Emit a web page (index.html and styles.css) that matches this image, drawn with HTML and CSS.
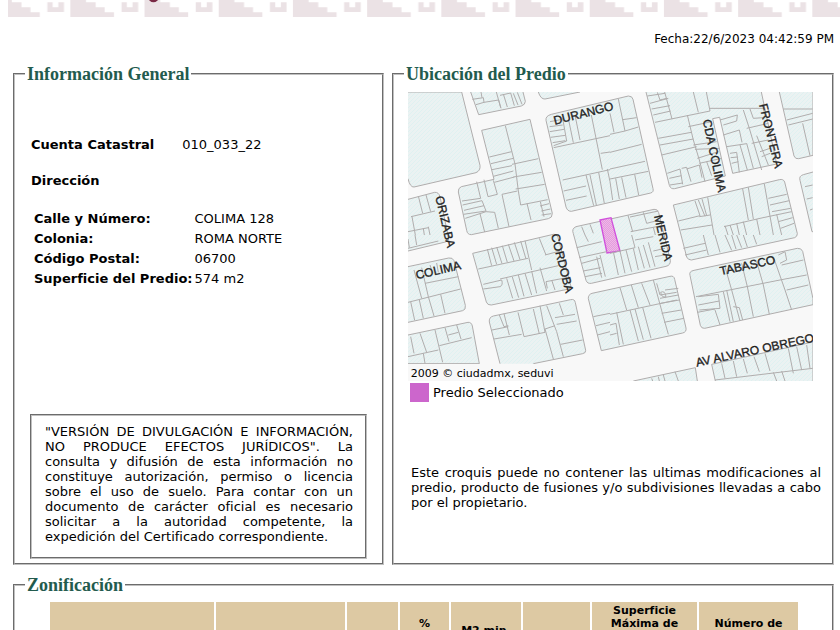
FILE: index.html
```html
<!DOCTYPE html>
<html lang="es">
<head>
<meta charset="utf-8">
<meta name="viewport" content="width=device-width, initial-scale=1">
<title>Información del Predio</title>
<link rel="stylesheet" href="styles.css">
</head>
<body>
<header class="banner">
<svg class="fret" aria-hidden="true">
<defs>
<pattern id="greca" x="-35.6" y="0" width="222.6" height="60" patternUnits="userSpaceOnUse" patternTransform="scale(.33333)">
<path fill="#ebe2e5" d="M0 0H47V7H76V22H103V37H131V51H0ZM153.600 7H169.600V22H186.600V7H203.600V36H153.600Z"/>
</pattern>
</defs>
<rect width="100%" height="17" fill="url(#greca)"/>
<circle cx="145.500" cy="-3" r="5.300" fill="#792844"/>
</svg>
</header>
<main class="page">
<p class="date">Fecha:22/6/2023 04:42:59 PM</p>
<div class="columns">
<fieldset class="panel general">
<legend>Información General</legend>
<dl class="account"><dt>Cuenta Catastral</dt><dd>010_033_22</dd></dl>
<h2 class="subtitle">Dirección</h2>
<table class="address">
<tr><th scope="row">Calle y Número:</th><td>COLIMA 128</td></tr>
<tr><th scope="row">Colonia:</th><td>ROMA NORTE</td></tr>
<tr><th scope="row">Código Postal:</th><td>06700</td></tr>
<tr><th scope="row">Superficie del Predio:</th><td>574 m2</td></tr>
</table>
<p class="notice">"VERSIÓN DE DIVULGACIÓN E INFORMACIÓN, NO PRODUCE EFECTOS JURÍDICOS". La consulta y difusión de esta información no constituye autorización, permiso o licencia sobre el uso de suelo. Para contar con un documento de carácter oficial es necesario solicitar a la autoridad competente, la expedición del Certificado correspondiente.</p>
</fieldset>
<fieldset class="panel location">
<legend>Ubicación del Predio</legend>
<svg class="map" viewBox="0 0 1215 867" role="img" aria-label="Croquis de ubicación del predio">
<defs>
<pattern id="hatch" width="12" height="12" patternUnits="userSpaceOnUse"><rect width="12" height="12" fill="#ebf2f2"/><path d="M-3 3L3-3M0 12L12 0M9 15L15 9" stroke="#dcf1f0" stroke-width="2.500"/></pattern>
<pattern id="lot" width="6" height="6" patternUnits="userSpaceOnUse"><rect width="6" height="6" fill="#f0b8e8"/><path d="M0 6L6 0" stroke="#dc8ed8" stroke-width="2"/></pattern>
</defs>
<rect width="1215" height="867" fill="#f8f8f8"/>
<g class="blocks">
<path d="M0 0H161L216 220Q218 236 204 242L18 285Q6 286 0 260"/>
<path d="M188 0L212 68L340 42Q352 38 352 28L345 0"/>
<path d="M221 115L366 82L433 364Q433 378 421 380L190 428Q178 428 176 415L151 300Q150 288 160 284L258 262Z"/>
<path d="M391 0Q398 22 411 21L516 0"/>
<path d="M414 85Q412 72 430 67L661 12Q673 12 675 22L735 290Q738 300 728 303L490 358Q478 358 474 345Z"/>
<path d="M714 0L784 280Q788 292 800 290L952 252L914 80L935 76L974 244L1106 216L1060 0"/>
<path d="M1114 0L1158 192Q1162 202 1172 200L1215 190V0"/>
<path d="M796 339L1114 263Q1126 260 1130 270L1168 425Q1168 434 1160 437L850 504Q840 504 836 495Z"/>
<path d="M1215 240L1186 248Q1172 252 1176 265L1212 419H1217"/>
<path d="M0 322L80 301Q92 300 96 314L122 440Q122 448 112 450L0 477"/>
<path d="M0 524L122 498Q134 496 138 506L172 640Q174 654 164 656L0 691"/>
<path d="M194 484L436 427Q446 424 450 436L488 580Q490 590 478 592L250 639Q238 640 235 630Z"/>
<path d="M276 815L244 690Q242 676 256 672L488 623Q500 620 502 632L533 775Q534 783 524 785L376 815"/>
<path d="M0 729L180 691Q190 690 193 702L214 815H0"/>
<path d="M496 425Q490 410 504 404L738 352Q748 350 752 362L787 505Q788 520 774 523L550 574Q538 576 534 565Z"/>
<path d="M580 776L541 620Q540 608 552 604L786 553Q798 550 800 562L834 708Q836 720 824 723Z"/>
<path d="M846 550Q842 538 858 535L1168 469Q1180 468 1184 478L1215 620V638L890 709Q880 710 877 700Z"/>
<path d="M676 867L862 827L868 867"/>
<path d="M922 867L911 817L1215 750V867"/>
</g>
<path class="selected" d="M576 384L609 377L636 477L597 483Z"/>
<g class="lots">
<g transform="translate(-24 -21)">
<path d="M217 43L250 38L252 52L296 45L303 70M289 21L302 68M252 52L228 59M246 38L243 21M310 27L322 66M300 31L332 24L343 62M340 25L354 60M352 22L366 58"/>
<path d="M316 122L345 237L355 318L362 360L443 344M268 216L335 200M273 236L340 220M276 254L336 242M280 274L340 258M283 292L343 276M336 238L415 221M340 276L425 262M347 312L434 298M306 328L352 318M306 328L327 425M381 355L393 405M421 350L432 395M420 363L447 356M424 378L451 372M425 390L454 386"/>
<path d="M230 290L242 340L186 348M252 284L264 335L292 328L280 286M188 360L246 347L258 378L190 388M192 376L252 362M196 400L258 380L284 382L295 430M240 386L254 441"/>
<path d="M488 100L500 168L461 182M506 105L520 173M526 95L540 165M574 90L607 254M461 188L630 152M449 125L488 120M449 140L492 133M452 157L496 151M458 173L496 167M450 110L482 104M488 285L630 254M558 270L581 362M570 270L589 360M596 262L613 355M491 318L558 303M498 346L560 333M602 205L630 201M622 252L630 290"/>
<path d="M55 333L68 385M78 330L92 380M33 395L105 378M36 395L46 450M70 430L73 450M85 425L90 450M24 440L85 428M545 425L555 450M570 418L580 445"/>
</g>
<g transform="translate(606 -21)">
<path d="M25 42L45 138L0 148M0 85L12 142M38 104L80 98M45 138L85 126M0 202L95 178M0 252L105 229M0 282L115 259M17 280L28 342M35 277L48 338M74 268L86 330M0 290L8 345"/>
<path d="M112 33L165 25M120 55L175 40M125 72L180 62M130 90L182 78M135 112L300 78L289 21M142 22L150 45L170 40M164 21L186 102M250 21L265 82M232 90L250 165L268 225L285 290M145 160L244 142M150 180L250 162M155 210L260 185M235 125L305 110M250 180L320 170M255 193L330 190M262 220L325 200M268 235L335 220M172 265L210 252L218 298M178 280L214 272M180 300L218 294M215 250L230 247L243 290M230 252L268 240L276 278M290 230L305 272M300 70H465M330 105L382 90L380 108L340 120M400 75L418 130L455 255M420 72L430 100L460 98M340 150L388 135L396 172M350 185L410 176M360 205L380 202L388 262M362 218L383 216M365 235L385 230M390 180L412 255M410 175L430 250M440 152L475 240M410 130L475 115M425 175L475 165M450 200L480 190M455 215L480 205"/>
<path d="M520 72H608M530 105L608 85M535 120L608 102M578 115L600 212M585 305L608 300M590 342L608 338M600 375L608 372"/>
<path d="M255 348L270 392L205 408M265 345L285 394M276 342L290 392M293 337L312 450M268 395L300 390M212 435L306 420M398 312L415 405M415 307L430 402M463 297L490 450M475 340L530 328M480 360L538 347M486 380L542 370M342 425L450 400M345 422L354 450M360 420L370 450M380 415L388 450M400 410L410 450M440 402L450 450M450 400L545 380M500 388L515 450M505 410L548 398M512 430L552 415"/>
<path d="M54 391L68 440M60 396L145 378M100 382L110 415L145 406M62 440L140 425M130 427L136 450"/>
</g>
<g transform="translate(-24 429)">
<path d="M45 0L50 30M24 40L115 18M24 12L28 38M42 105L65 190M65 98L85 185M90 90L95 105M110 84L115 112M75 145L175 125M24 202L182 162M32 200L44 256M58 195L70 250M85 185L102 243M122 178L135 235"/>
<path d="M235 102L384 70M262 42L275 92M275 38L290 88M290 36L306 86M307 32L322 82M325 28L342 78M343 22L360 74M362 18L378 72M375 17L395 105M250 148L305 135Q310 150 300 155L250 162M320 130L338 190M337 126L356 188M355 120L372 184M375 115L395 180M395 108L410 175M420 98L440 168M300 132L475 92M435 60L480 48M418 10L438 60M438 140L500 128M442 160L438 140M455 135L465 165"/>
<path d="M298 240L312 275L325 272M312 236L328 300M276 285L325 275M282 312L365 298M354 232L372 305L435 292L420 212M400 222L418 297M435 282L460 372M440 212L470 290L490 365M478 205L490 240M435 282L465 272M465 248L525 238M470 268L530 258M482 328L548 315"/>
<path d="M32 305L42 355M60 295L80 352M24 365L115 345M105 285L128 382M135 278L147 320M170 270L183 312M118 332L215 308M145 300L175 292M70 355L75 385"/>
<path d="M555 0L565 20M530 38L605 20M538 68L620 50M545 85L600 70M550 108L602 98M555 125L606 115M590 65L605 128M600 60L616 125M580 245L630 235M588 272L630 262M592 300L630 290"/>
</g>
<g transform="translate(606 429)">
<path d="M0 55L75 38L65 0M10 50L25 120M30 48L45 115M48 45L65 110M70 40L85 105M85 35L103 100M100 30L120 98M115 22L135 95M75 15L130 5M130 48L165 40M135 65L175 58"/>
<path d="M30 158L50 225M64 150L85 218M95 145L120 210M130 135L160 245L175 298M0 238L200 195M20 232L40 328M60 225L85 318M75 222L100 314M98 217L123 310M140 145L150 180L200 172M165 165L205 160M150 190L205 180M152 205L208 195M155 235L214 225M162 262L222 250M0 270L18 265L28 330M0 300L20 295M152 172Q165 165 168 185Q155 190 152 172"/>
<path d="M220 40L285 25M225 60L290 45M280 0L295 60M315 0L330 52M345 0L365 46M365 0L378 42M380 0L395 38M400 0L412 36M430 0L440 28"/>
<path d="M258 185L525 132M345 95L365 165L390 258M395 85L412 155L430 245M440 80L460 150L478 238M490 65L525 165L545 225M265 185L325 178L330 220L268 225M265 210L328 198M340 170L360 260M350 165L370 260M370 215L388 218L398 255M315 225L330 270M262 232L315 222M505 60L525 50L530 75L510 85M515 90L580 75M525 132L590 120M530 165L595 150"/>
<path d="M335 385L345 430M370 378L380 425M400 372L412 415M432 365L448 410M465 355L480 408M535 340L550 415M560 335L575 405M590 330L600 400M315 435L608 400M490 412L500 438M515 408L525 438M195 410L205 438M160 420L165 438M145 425L148 438M125 430L128 438"/>
</g>
</g>
<g class="streets">
<text transform="translate(440 98) rotate(-14)">DURANGO</text>
<text transform="translate(884 85) rotate(78)">CDA COLIMA</text>
<text transform="translate(1053 38) rotate(76)">FRONTERA</text>
<text transform="translate(82 315) rotate(77)">ORIZABA</text>
<text transform="translate(26 562) rotate(-13)">COLIMA</text>
<text transform="translate(429 428) rotate(76)">CORDOBA</text>
<text transform="translate(738 372) rotate(77)">MERIDA</text>
<text transform="translate(938 550) rotate(-12)">TABASCO</text>
<text transform="translate(866 824) rotate(-12)">AV ALVARO OBREGO</text>
</g>
<rect y="816" width="460" height="51" fill="#f8f8f8"/>
<text class="credit" x="8" y="855">2009 © ciudadmx, seduvi</text>
</svg>
<p class="key"><span class="swatch"></span>Predio Seleccionado</p>
<p class="disclaimer">Este croquis puede no contener las ultimas modificaciones al predio, producto de fusiones y/o subdivisiones llevadas a cabo por el propietario.</p>
</fieldset>
</div>
<fieldset class="panel zoning">
<legend>Zonificación</legend>
<table class="zones">
<colgroup><col class="use"><col class="levels"><col class="height"><col class="free"><col class="minimum"><col class="density"><col class="surface"><col class="homes"></colgroup>
<thead><tr><th scope="col">Uso del Suelo</th><th scope="col">Niveles</th><th scope="col">Altura</th><th scope="col">%<br>Área<br>Libre</th><th scope="col">M2 min.<br>Vivienda</th><th scope="col">Densidad</th><th scope="col">Superficie<br>Máxima de<br>Construcción<br>(Sujeta a<br>restricciones)</th><th scope="col">Número de<br>Viviendas<br>Permitidas</th></tr></thead>
</table>
</fieldset>
</main>
</body>
</html>
```
FILE: styles.css
```css
* { box-sizing: border-box; }
body {
  margin: 0;
  background: #fff;
  color: #000;
  font-family: "DejaVu Sans", Verdana, sans-serif;
  font-size: 13px;
  line-height: 15px;
}
p, dl, dd, h2 { margin: 0; }
.banner { padding-left: 8px; }
.fret { display: block; width: 100%; height: 17px; }
.page { padding: 15px 6px 16px 13px; }
.date { text-align: right; font-size: 12px; }
.columns {
  display: grid;
  grid-template-columns: 371fr 442fr;
  gap: 8px;
  margin-top: 17px;
}
.panel {
  min-width: 0;
  margin: 0;
  padding: 0 15px 4px 10px;
  border: 2px groove #c0c0c0;
}
.panel legend {
  padding: 0 2px;
  color: #235b4e;
  font: bold 18px/20px "Liberation Serif", serif;
}
.account { display: flex; gap: 28px; margin: 53px 0 0 6px; }
.account dt, .subtitle { font-size: 13px; font-weight: bold; }
.subtitle { margin: 21px 0 0 6px; line-height: 15px; }
.address { margin: 19px 0 0 7px; border-spacing: 2px 3px; }
.address th, .address td { padding: 1px 0; text-align: left; }
.notice {
  margin: 124px 0 0 5px;
  padding: 8px 12px 13px 13px;
  border: 2px groove #c0c0c0;
  text-align: justify;
}
.map { display: block; width: 405px; max-width: 100%; margin: 8px 0 0 4px; }
.blocks { fill: url(#hatch); stroke: #b0adad; stroke-width: 3; }
.lots { fill: none; stroke: #b0adad; stroke-width: 3; }
.selected { fill: url(#lot); stroke: #d050dc; stroke-width: 4; }
.streets { fill: #222; font: 36px "Liberation Sans", sans-serif; stroke: #222; stroke-width: 1; }
.credit { fill: #000; font: 33px "DejaVu Sans", sans-serif; }
.key { display: flex; align-items: center; gap: 4px; margin: 2px 0 0 6px; }
.swatch { width: 19px; height: 19px; background: #cc66cc; }
.disclaimer { margin: 63px 0 0 7px; text-align: justify; }
.location { padding-right: 11px; }
.zoning { margin-top: 10px; }
.zones {
  width: 752px;
  max-width: 100%;
  margin: 5px 0 0 23px;
  border-spacing: 2px;
  table-layout: fixed;
}
.zones th { padding: 2px 0; background: #ddc9a3; font-size: 11px; line-height: 13px; }
.use { width: 164px; }
.levels { width: 129px; }
.height { width: 51px; }
.free { width: 49px; }
.minimum { width: 70px; }
.density { width: 67px; }
.surface { width: 105px; }
.homes { width: 99px; }
```
